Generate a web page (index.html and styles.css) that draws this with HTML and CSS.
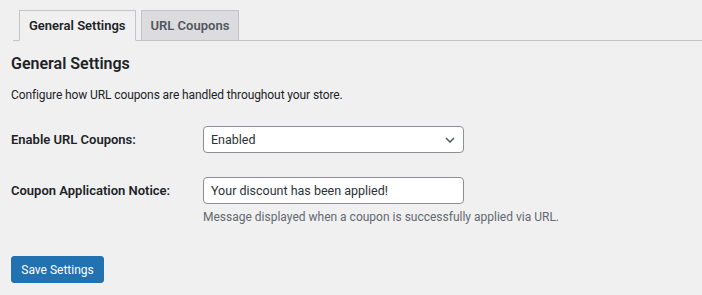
FILE: index.html
```html
<!DOCTYPE html>
<html lang="en">
<head>
    <meta charset="UTF-8">
    <meta name="viewport" content="width=device-width, initial-scale=1.0">
    <title>URL Coupons Settings</title>
    <link rel="stylesheet" href="styles.css">
</head>
<body>
    <div class="nav-tab-wrapper">
        <a href="#" class="nav-tab nav-tab-active">General Settings</a>
        <a href="#" class="nav-tab">URL Coupons</a>
    </div>

    <div class="content">
        <h2>General Settings</h2>
        <p class="intro">Configure how URL coupons are handled throughout your store.</p>

        <form class="settings-form">
            <div class="form-row">
                <label for="enable-url-coupons">Enable URL Coupons:</label>
                <div class="field">
                    <select id="enable-url-coupons" name="enable-url-coupons">
                        <option selected>Enabled</option>
                        <option>Disabled</option>
                    </select>
                </div>
            </div>

            <div class="form-row">
                <label for="coupon-notice">Coupon Application Notice:</label>
                <div class="field">
                    <input type="text" id="coupon-notice" name="coupon-notice" value="Your discount has been applied!">
                    <p class="description">Message displayed when a coupon is successfully applied via URL.</p>
                </div>
            </div>

            <button type="submit" class="button-primary">Save Settings</button>
        </form>
    </div>
</body>
</html>
```

FILE: styles.css
```css
body {
    font-family: 'Roboto', 'Noto Sans', sans-serif;
    background-color: #f0f0f1;
    color: #1d2327;
    margin: 0;
    padding: 0;
    font-size: 12px;
}
.nav-tab-wrapper {
    display: flex;
    gap: 5px;
    margin: 10px 0 0 13px;
    padding-left: 6px;
    border-bottom: 1px solid #c3c4c7;
}
.nav-tab {
    display: block;
    height: 29px;
    line-height: 29px;
    padding: 0 9px;
    margin-bottom: -1px;
    border: 1px solid #c3c4c7;
    background-color: #dcdcde;
    color: #50575e;
    font-size: 13px;
    font-weight: 600;
    text-decoration: none;
}
.nav-tab-active {
    background-color: #f0f0f1;
    border-bottom-color: #f0f0f1;
    color: #1d2327;
}
.content {
    padding: 0 11px;
}
h2 {
    margin: 12px 0 0;
    font-size: 16px;
    line-height: 22px;
    font-weight: 600;
}
.intro {
    margin: 10px 0 0;
    line-height: 20px;
    letter-spacing: -0.1px;
}
.settings-form {
    margin-top: 21px;
}
.form-row {
    display: grid;
    grid-template-columns: 192px 261px;
    align-items: start;
    margin-bottom: 24px;
}
.form-row > label {
    font-size: 13px;
    font-weight: 600;
    line-height: 27px;
}
select, input[type="text"] {
    display: block;
    width: 261px;
    height: 27px;
    box-sizing: border-box;
    border: 1px solid #8c8f94;
    border-radius: 4px;
    background-color: #fff;
    color: #2c3338;
    font-family: inherit;
    font-size: 12.5px;
    padding: 0 7px;
    margin: 0;
}
select {
    appearance: none;
    -webkit-appearance: none;
    background-image: url("data:image/svg+xml;utf8,<svg xmlns='http://www.w3.org/2000/svg' width='10' height='6' viewBox='0 0 10 6'><path d='M1 1l4 4 4-4' fill='none' stroke='%2350575e' stroke-width='1.5'/></svg>");
    background-repeat: no-repeat;
    background-position: right 8px center;
}
.description {
    margin: 4px 0 0;
    color: #646970;
    line-height: 18px;
    white-space: nowrap;
}
.button-primary {
    display: block;
    margin-top: 30px;
    width: 93px;
    height: 27px;
    padding: 0;
    border: 1px solid #2271b1;
    border-radius: 3px;
    background-color: #2271b1;
    color: #fff;
    font-family: inherit;
    font-size: 12px;
    cursor: pointer;
}
```
